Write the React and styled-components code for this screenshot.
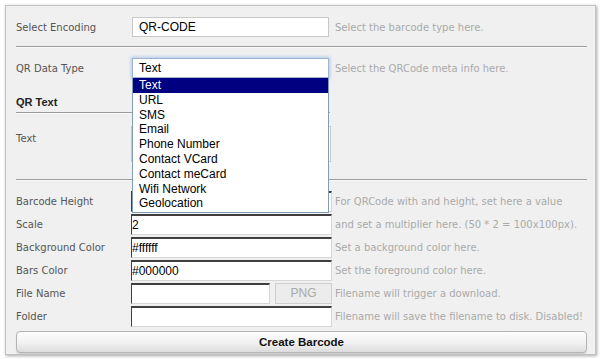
import React from 'react';
import styled, { createGlobalStyle } from 'styled-components';

const GlobalStyle = createGlobalStyle`
	html, body {
		margin: 0;
		padding: 0;
		background: #fff;
	}
	* {
		box-sizing: border-box;
	}
`;

const dataTypes = [
	'Text',
	'URL',
	'SMS',
	'Email',
	'Phone Number',
	'Contact VCard',
	'Contact meCard',
	'Wifi Network',
	'Geolocation'
];

export default function App() {
	return (
		<>
			<GlobalStyle />
			<Panel>
				<Row>
					<Label>Select Encoding</Label>
					<PlainInput defaultValue='QR-CODE' />
					<Help>Select the barcode type here.</Help>
				</Row>
				<Divider />
				<Row>
					<Label>QR Data Type</Label>
					<SelectWrap>
						<SelectBox>Text</SelectBox>
						<OptionList>
							{dataTypes.map((t, i) => (
								<OptionItem key={t} selected={i === 0}>
									{t}
								</OptionItem>
							))}
						</OptionList>
					</SelectWrap>
					<Help>Select the QRCode meta info here.</Help>
				</Row>
				<SectionTitle>QR Text</SectionTitle>
				<Row align='start'>
					<Label pad={7}>Text</Label>
					<TextArea />
				</Row>
				<Divider spacing='top' />
				<Fields>
					<Row>
						<Label>Barcode Height</Label>
						<InsetInput />
						<Help>For QRCode with and height, set here a value</Help>
					</Row>
					<Row>
						<Label>Scale</Label>
						<InsetInput defaultValue='2' />
						<Help>and set a multiplier here. (50 * 2 = 100x100px).</Help>
					</Row>
					<Row>
						<Label>Background Color</Label>
						<InsetInput defaultValue='#ffffff' />
						<Help>Set a background color here.</Help>
					</Row>
					<Row>
						<Label>Bars Color</Label>
						<InsetInput defaultValue='#000000' />
						<Help>Set the foreground color here.</Help>
					</Row>
					<Row>
						<Label>File Name</Label>
						<FileGroup>
							<InsetInput />
							<Extension>PNG</Extension>
						</FileGroup>
						<Help>Filename will trigger a download.</Help>
					</Row>
					<Row>
						<Label>Folder</Label>
						<InsetInput />
						<Help>Filename will save the filename to disk. Disabled!</Help>
					</Row>
				</Fields>
				<CreateButton>Create Barcode</CreateButton>
			</Panel>
		</>
	);
}

const Panel = styled.div`
	margin: 5px 4px 4px 5px;
	width: 591px;
	height: 350px;
	background: #f0f0f0;
	border: 1px solid #c2c2c2;
	box-shadow: 1px 1px 3px rgba(0, 0, 0, 0.35);
	padding: 11px 8px 0 10px;
	position: relative;
`;

const Row = styled.div`
	display: grid;
	grid-template-columns: 112px 201px 1fr;
	column-gap: 3px;
	align-items: ${({ align }) => align || 'center'};
	min-height: 20px;
`;

const Label = styled.div`
	font-family: 'DejaVu Sans', Tahoma, sans-serif;
	font-size: 10px;
	color: #555;
	padding-top: ${({ pad }) => pad || 0}px;
	white-space: nowrap;
`;

const Help = styled.div`
	font-family: 'DejaVu Sans', Tahoma, sans-serif;
	font-size: 10px;
	color: #aaa;
	white-space: nowrap;
`;

const Divider = styled.div`
	height: 2px;
	border-top: 1px solid #9c9c9c;
	border-bottom: 1px solid #fafafa;
	margin: ${({ spacing }) => (spacing === 'top' ? '17px 0 10px' : '9px 0 10px')};
`;

const PlainInput = styled.input`
	width: 197px;
	height: 20px;
	margin-left: 1px;
	border: 1px solid #c8c8c8;
	background: #fff;
	padding: 0 6px;
	font-family: 'Liberation Sans', Arial, sans-serif;
	font-size: 12px;
	color: #000;
	outline: none;
`;

const SelectWrap = styled.div`
	position: relative;
	width: 197px;
	margin-left: 1px;
	height: 20px;
	z-index: 5;
`;

const SelectBox = styled.div`
	height: 20px;
	border: 1px solid #9fb4d2;
	box-shadow: 0 0 3px 1px rgba(120, 170, 230, 0.55);
	background: #fff;
	padding: 0 6px;
	font-family: 'Liberation Sans', Arial, sans-serif;
	font-size: 12px;
	line-height: 19px;
	color: #000;
`;

const OptionList = styled.div`
	position: absolute;
	top: 20px;
	left: 0;
	width: 197px;
	background: #fff;
	border: 1px solid #7f9db9;
	border-top: none;
	padding-bottom: 1px;
`;

const OptionItem = styled.div`
	height: 14.8px;
	line-height: 15px;
	padding-left: 6px;
	font-family: 'Liberation Sans', Arial, sans-serif;
	font-size: 12px;
	background: ${({ selected }) => (selected ? '#000080' : '#fff')};
	color: ${({ selected }) => (selected ? '#fff' : '#000')};
`;

const SectionTitle = styled.div`
	width: 314px;
	margin-top: 17px;
	padding-bottom: 3px;
	border-bottom: 1px solid #9c9c9c;
	box-shadow: 0 1px 0 #fafafa;
	font-family: 'Liberation Sans', Arial, sans-serif;
	font-weight: bold;
	font-size: 11px;
	line-height: 14px;
	color: #222;
	margin-bottom: 13px;
`;

const TextArea = styled.textarea`
	width: 200px;
	height: 36px;
	border: 1px solid #c8c8c8;
	background: #fff;
	resize: both;
	outline: none;
`;

const Fields = styled.div`
	display: flex;
	flex-direction: column;
	gap: 2px;
`;

const InsetInput = styled.input`
	width: 201px;
	height: 21px;
	border-style: solid;
	border-width: 2px 1px 1px 1px;
	border-color: #3f3f3f #d6d6d6 #d6d6d6 #3f3f3f;
	background: #fff;
	padding: 0;
	font-family: 'Liberation Sans', Arial, sans-serif;
	font-size: 12px;
	color: #000;
	outline: none;
`;

const FileGroup = styled.div`
	display: flex;
	gap: 5px;
	${InsetInput} {
		width: 139px;
	}
`;

const Extension = styled.div`
	width: 57px;
	height: 21px;
	border: 1px solid #cfcfcf;
	background: #ececec;
	color: #a8a8a8;
	font-family: 'Liberation Sans', Arial, sans-serif;
	font-size: 12px;
	line-height: 19px;
	text-align: center;
`;

const CreateButton = styled.button`
	display: block;
	width: 571px;
	height: 22px;
	margin-top: 4px;
	border: 1px solid #b4b4b4;
	border-radius: 4px;
	background: linear-gradient(#fdfdfd, #f1f1f1 55%, #dcdcdc);
	box-shadow: 0 1px 1px rgba(0, 0, 0, 0.15);
	font-family: 'Liberation Sans', Arial, sans-serif;
	font-weight: bold;
	font-size: 11.5px;
	color: #111;
	padding: 0;
`;
